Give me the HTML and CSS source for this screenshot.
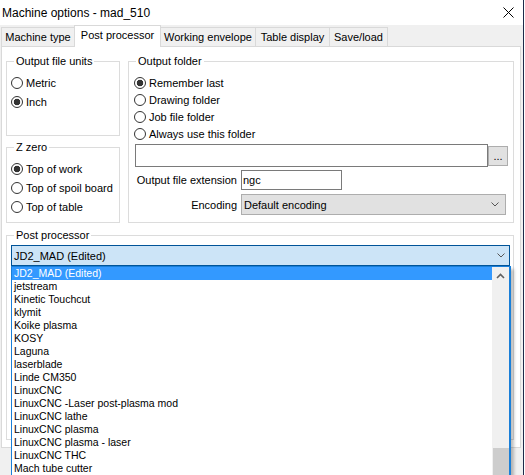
FILE: index.html
```html
<!DOCTYPE html>
<html>
<head>
<meta charset="utf-8">
<link rel="stylesheet" href="styles.css">
</head>
<body>
<div class="window">
  <div class="titlebar">
    <span class="title">Machine options - mad_510</span>
    <svg class="close" width="11" height="11" viewBox="0 0 11 11"><path d="M0.5 0.5L10.5 10.5M10.5 0.5L0.5 10.5" stroke="#000" stroke-width="1" fill="none"/></svg>
  </div>
  <div class="dialog">
    <div class="tabs">
      <div class="tab t1">Machine type</div>
      <div class="tab t2 active">Post processor</div>
      <div class="tab t3">Working envelope</div>
      <div class="tab t4">Table display</div>
      <div class="tab t5">Save/load</div>
    </div>
    <div class="panel">
      <div class="row-top">
        <div class="col-left">
          <div class="group g-units">
            <span class="gtitle">Output file units</span>
            <div class="radio"><span class="rb"></span>Metric</div>
            <div class="radio"><span class="rb on"></span>Inch</div>
          </div>
          <div class="group g-zero">
            <span class="gtitle">Z zero</span>
            <div class="radio"><span class="rb on"></span>Top of work</div>
            <div class="radio"><span class="rb"></span>Top of spoil board</div>
            <div class="radio"><span class="rb"></span>Top of table</div>
          </div>
        </div>
        <div class="group g-folder">
          <span class="gtitle">Output folder</span>
          <div class="radio sm"><span class="rb on"></span>Remember last</div>
          <div class="radio sm"><span class="rb"></span>Drawing folder</div>
          <div class="radio sm"><span class="rb"></span>Job file folder</div>
          <div class="radio sm"><span class="rb"></span>Always use this folder</div>
          <div class="path-row">
            <div class="textbox path"></div>
            <div class="btn">...</div>
          </div>
          <div class="field-row ext-row">
            <span class="flabel">Output file extension</span>
            <div class="textbox ext">ngc</div>
          </div>
          <div class="field-row enc-row">
            <span class="flabel">Encoding</span>
            <div class="select">
              <span>Default encoding</span>
              <svg width="8" height="5" viewBox="0 0 8 5"><path d="M0.5 0.5L4 4L7.5 0.5" fill="none" stroke="#555" stroke-width="1"/></svg>
            </div>
          </div>
        </div>
      </div>
      <div class="group g-post">
        <span class="gtitle">Post processor</span>
        <div class="combo-wrap">
          <div class="combo">
            <span>JD2_MAD (Edited)</span>
            <svg width="8" height="5" viewBox="0 0 8 5"><path d="M0.5 0.5L4 4L7.5 0.5" fill="none" stroke="#555" stroke-width="1"/></svg>
          </div>
          <div class="dropdown">
            <ul class="items">
              <li class="sel">JD2_MAD (Edited)</li>
              <li>jetstream</li>
              <li>Kinetic Touchcut</li>
              <li>klymit</li>
              <li>Koike plasma</li>
              <li>KOSY</li>
              <li>Laguna</li>
              <li>laserblade</li>
              <li>Linde CM350</li>
              <li>LinuxCNC</li>
              <li>LinuxCNC -Laser post-plasma mod</li>
              <li>LinuxCNC lathe</li>
              <li>LinuxCNC plasma</li>
              <li>LinuxCNC plasma - laser</li>
              <li>LinuxCNC THC</li>
              <li>Mach tube cutter</li>
            </ul>
            <div class="scrollbar">
              <div class="arrow"><svg width="9" height="6" viewBox="0 0 9 6"><path d="M1 5L4.5 1.5L8 5" fill="none" stroke="#606060" stroke-width="1.6"/></svg></div>
              <div class="thumb"></div>
            </div>
          </div>
        </div>
      </div>
    </div>
  </div>
</div>
</body>
</html>
```

FILE: styles.css
```css
* { box-sizing: border-box; }
html, body { margin: 0; padding: 0; background: #fff; }
body {
  font-family: "Liberation Sans", Arial, sans-serif;
  font-size: 11px;
  color: #000;
}
.window {
  width: 524px;
  height: 475px;
  overflow: hidden;
  border-right: 1px solid #1e2a4a;
  background: #fff;
  display: flex;
  flex-direction: column;
}
.titlebar {
  height: 25px;
  flex: none;
  display: flex;
  align-items: center;
  justify-content: space-between;
  padding: 0 9px 0 2px;
}
.title { font-size: 12px; }
.dialog {
  flex: 1;
  background: #f0f0f0;
  display: flex;
  flex-direction: column;
}
.tabs {
  height: 21px;
  flex: none;
  display: flex;
  align-items: flex-end;
  padding-left: 1px;
  position: relative;
  z-index: 1;
}
.tab {
  height: 19px;
  border: 1px solid #d9d9d9;
  border-bottom: none;
  margin-right: -1px;
  background: #f0f0f0;
  display: flex;
  align-items: center;
  justify-content: center;
  padding-bottom: 1px;
}
.tab.active {
  height: 22px;
  margin-bottom: -1px;
  background: #fff;
  position: relative;
  z-index: 2;
  padding-bottom: 3px;
}
.t1 { width: 74px; }
.t2 { width: 87px; }
.t3 { width: 96px; }
.t4 { width: 75px; }
.t5 { width: 59px; }
.panel {
  margin-left: 1px;
  width: 520px;
  height: 402px;
  flex: none;
  border: 1px solid #d9d9d9;
  background: #fff;
  padding: 14px 0 0 4px;
}
.row-top {
  display: flex;
  gap: 8px;
}
.col-left {
  width: 114px;
  display: flex;
  flex-direction: column;
  gap: 11px;
}
.group {
  position: relative;
  border: 1px solid #dcdcdc;
  padding: 0 4px;
}
.gtitle {
  position: absolute;
  top: -8px;
  left: 7px;
  padding: 0 2px;
  line-height: 14px;
  background: #fff;
}
.g-units { height: 75px; padding-top: 11px; }
.g-zero { height: 76px; padding-top: 11px; }
.g-folder { width: 386px; height: 162px; padding-top: 12px; padding-left: 5px; }
.radio {
  display: flex;
  align-items: center;
  height: 19px;
  gap: 3px;
}
.radio.sm { height: 17px; }
.rb {
  width: 12px;
  height: 12px;
  border: 1px solid #333;
  border-radius: 50%;
  background: #fff;
  flex: none;
}
.rb.on {
  background: radial-gradient(circle, #333 0 3px, #fff 3.6px);
}
.path-row {
  display: flex;
  align-items: center;
  margin-top: 2px;
  margin-left: 1px;
}
.textbox {
  border: 1px solid #7a7a7a;
  background: #fff;
  display: flex;
  align-items: center;
  padding-left: 1px;
}
.path { width: 353px; height: 23px; }
.btn {
  width: 20px;
  height: 20px;
  background: #e1e1e1;
  border: 1px solid #adadad;
  display: flex;
  align-items: flex-end;
  justify-content: center;
  padding-bottom: 4px;
  line-height: 10px;
}
.field-row {
  display: flex;
  align-items: center;
  gap: 4px;
  margin-left: 1px;
}
.flabel {
  width: 102px;
  text-align: right;
}
.ext-row { margin-top: 3px; }
.ext { width: 101px; height: 20px; }
.enc-row { margin-top: 4px; }
.select {
  width: 265px;
  height: 21px;
  background: #e1e1e1;
  border: 1px solid #adadad;
  display: flex;
  align-items: center;
  justify-content: space-between;
  padding: 0 6px 0 2px;
}
.g-post {
  margin-top: 12px;
  width: 508px;
  height: 205px;
  padding: 9px 3px 0 4px;
}
.combo-wrap { position: relative; }
.combo {
  height: 21px;
  background: #cce4f7;
  border: 1px solid #005499;
  display: flex;
  align-items: center;
  justify-content: space-between;
  padding: 0 4px 0 2px;
}
.dropdown {
  position: absolute;
  top: 100%;
  left: 0;
  right: -1px;
  height: 214px;
  background: #fff;
  border: 1px solid #1a7fd8;
  border-right-width: 2px;
  display: flex;
  box-shadow: 3px 3px 3px rgba(0, 0, 0, 0.25);
  z-index: 5;
  overflow: hidden;
}
.items {
  list-style: none;
  margin: 0;
  padding: 0;
  flex: 1;
  font-size: 10.5px;
}
.items li {
  height: 13px;
  line-height: 13px;
  padding-left: 2px;
  white-space: nowrap;
}
.items li.sel {
  background: #3399ff;
  color: #fff;
}
.scrollbar {
  width: 17px;
  flex: none;
  background: #f0f0f0;
  display: flex;
  flex-direction: column;
  align-items: stretch;
}
.arrow {
  height: 17px;
  flex: none;
  display: flex;
  align-items: center;
  justify-content: center;
}
.thumb {
  flex: none;
  margin-top: 164px;
  margin-left: 1px;
  height: 60px;
  background: #cdcdcd;
}
```
